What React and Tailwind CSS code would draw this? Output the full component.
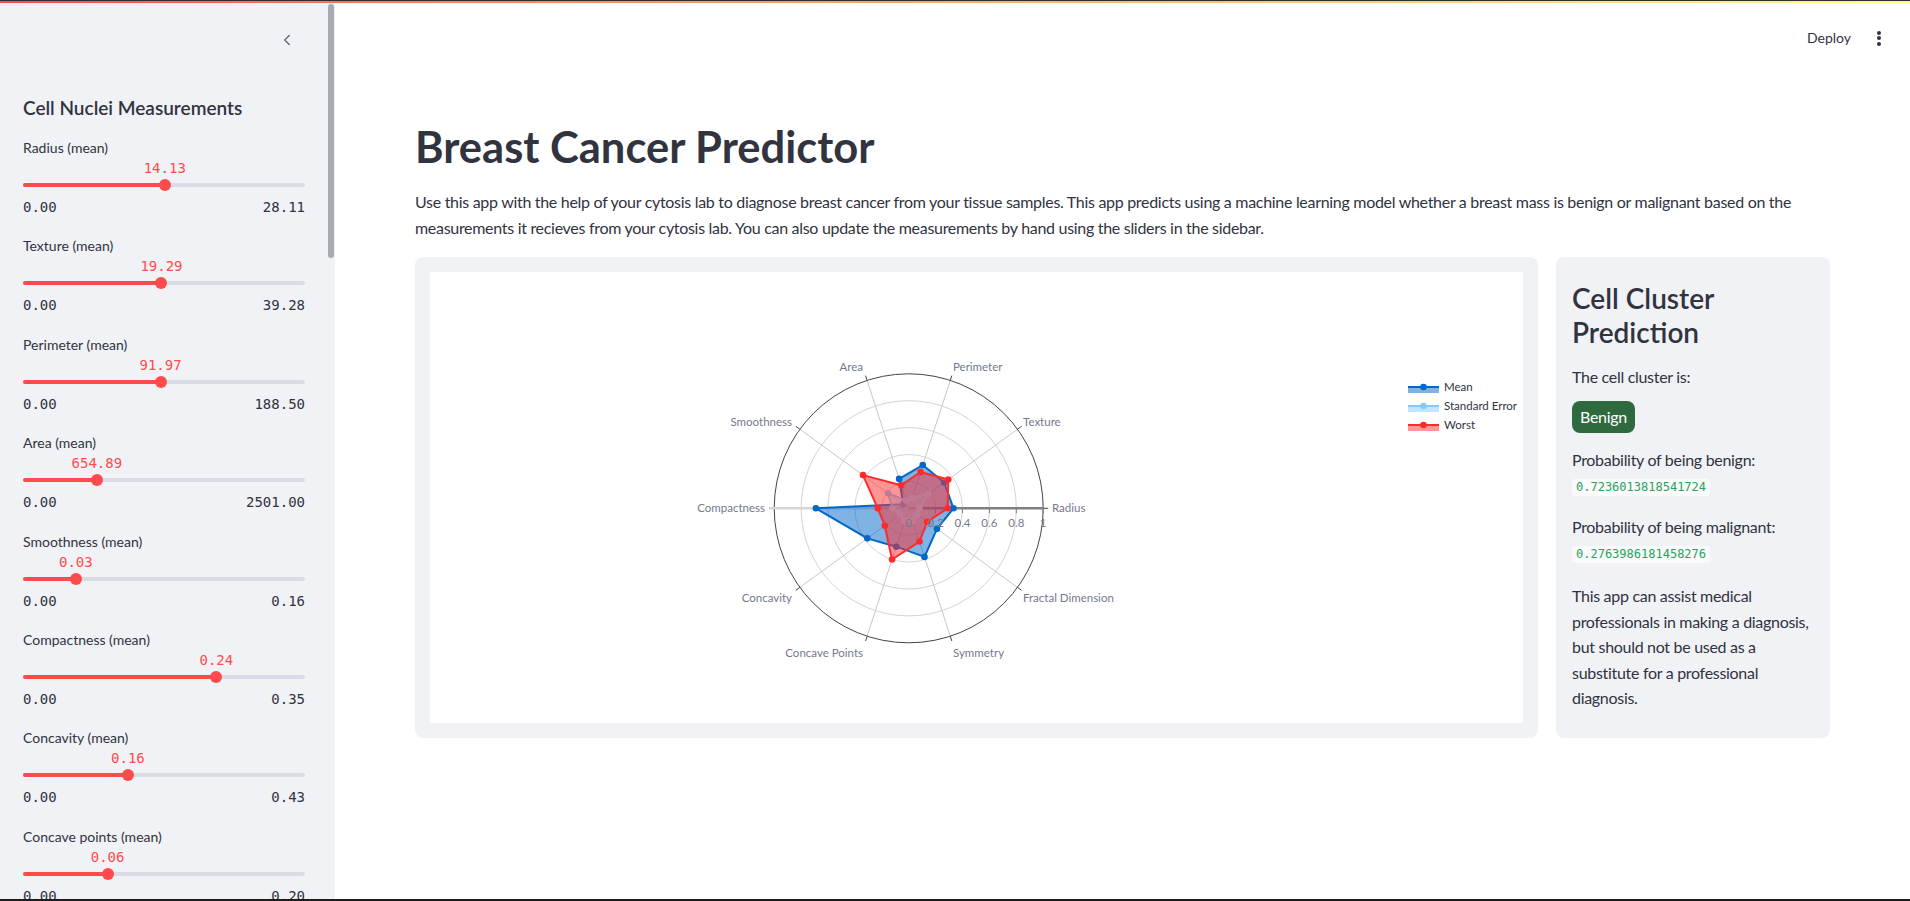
import { ChevronLeft } from 'lucide-react'

const SLIDERS = [
  { label: 'Radius (mean)', value: 14.13, max: 28.11 },
  { label: 'Texture (mean)', value: 19.29, max: 39.28 },
  { label: 'Perimeter (mean)', value: 91.97, max: 188.5 },
  { label: 'Area (mean)', value: 654.89, max: 2501 },
  { label: 'Smoothness (mean)', value: 0.03, max: 0.16 },
  { label: 'Compactness (mean)', value: 0.24, max: 0.35 },
  { label: 'Concavity (mean)', value: 0.16, max: 0.43 },
  { label: 'Concave points (mean)', value: 0.06, max: 0.2 },
]

const CATEGORIES = ['Radius', 'Texture', 'Perimeter', 'Area', 'Smoothness', 'Compactness', 'Concavity', 'Concave Points', 'Symmetry', 'Fractal Dimension']

// label anchor points measured off the chart, relative to the plot area
const LABELS = [
  [622, 236, 'start'], [593, 150, 'start'], [523, 95, 'start'], [433, 95, 'end'], [362, 150, 'end'],
  [335, 236, 'end'], [362, 326, 'end'], [433, 381, 'end'], [523, 381, 'start'], [593, 326, 'start'],
]

const TRACES = [
  { name: 'Mean', color: '#0068c9', fill: 'rgba(0,104,201,0.5)', r: [0.333, 0.326, 0.338, 0.23, 0.05, 0.69, 0.38, 0.3, 0.38, 0.26] },
  { name: 'Standard Error', color: '#83c9ff', fill: 'rgba(131,201,255,0.5)', r: [0.08, 0.18, 0.08, 0.06, 0.19, 0.12, 0.08, 0.1, 0.1, 0.08] },
  { name: 'Worst', color: '#ff2b2b', fill: 'rgba(255,43,43,0.5)', r: [0.29, 0.364, 0.284, 0.18, 0.42, 0.23, 0.22, 0.4, 0.26, 0.17] },
]

function Slider({ label, value, max }) {
  const pct = `${(value / max) * 100}%`
  return (
    <div className="h-[98.4px]">
      <div className="h-5 text-sm leading-5 text-[#31333f]">{label}</div>
      <div className="relative h-5">
        <span className="absolute top-0 -translate-x-1/2 font-['DejaVu_Sans_Mono',monospace] text-sm leading-5 text-[#ff4b4b]" style={{ left: pct }}>
          {value.toFixed(2)}
        </span>
      </div>
      <div className="flex h-[14px] items-center">
        <div className="relative h-1 w-full rounded-full bg-[#d9dce4]">
          <div className="absolute inset-y-0 left-0 rounded-full bg-[#ff4b4b]" style={{ width: pct }} />
          <div className="absolute top-1/2 h-3 w-3 -translate-x-1/2 -translate-y-1/2 rounded-full bg-[#ff4b4b]" style={{ left: pct }} />
        </div>
      </div>
      <div className="mt-[5px] flex justify-between font-['DejaVu_Sans_Mono',monospace] text-sm leading-5 text-[#31333f]">
        <span>0.00</span>
        <span>{max.toFixed(2)}</span>
      </div>
    </div>
  )
}

function Radar() {
  const cx = 478.7
  const cy = 236.3
  const R = 134.5
  const pt = (i, r) => {
    const a = (i * Math.PI) / 5
    return [cx + r * R * Math.cos(a), cy - r * R * Math.sin(a)]
  }
  const axisText = '#75798e'

  return (
    <svg width="1094" height="451" className="block">
      {[0.2, 0.4, 0.6, 0.8].map(r => (
        <circle key={r} cx={cx} cy={cy} r={r * R} fill="none" stroke="#d4d4d4" strokeWidth="1" />
      ))}
      {CATEGORIES.map((c, i) => {
        const [x1, y1] = pt(i, 1)
        const [x2, y2] = pt(i, 1.037)
        return (
          <g key={c}>
            <line x1={cx} y1={cy} x2={x1} y2={y1} stroke="#c8c8c8" strokeWidth="1" />
            <line x1={x1} y1={y1} x2={x2} y2={y2} stroke="#444" strokeWidth="1" />
          </g>
        )
      })}
      <circle cx={cx} cy={cy} r={R} fill="none" stroke="#444" strokeWidth="1" />
      <line x1={cx - R - 5} y1={cy} x2={cx} y2={cy} stroke="#d6d6d6" strokeWidth="2.5" />
      <line x1={cx} y1={cy} x2={cx + R} y2={cy} stroke="#808080" strokeWidth="2.5" />
      {[0.2, 0.4, 0.6, 0.8, 1].map(r => (
        <line key={r} x1={cx + r * R} y1={cy} x2={cx + r * R} y2={cy + 5} stroke="#808080" strokeWidth="1" />
      ))}

      {TRACES.map(t => {
        const pts = t.r.map((r, i) => pt(i, r))
        const d = pts.map(p => p.join(',')).join(' ')
        return (
          <g key={t.name}>
            <polygon points={d} fill={t.fill} stroke={t.color} strokeWidth="2" strokeLinejoin="round" />
            {pts.map(([x, y], i) => (
              <circle key={i} cx={x} cy={y} r="3.3" fill={t.color} />
            ))}
          </g>
        )
      })}

      <g fontFamily="Lato, sans-serif" fontSize="11.5" fill={axisText}>
        {[0, 0.2, 0.4, 0.6, 0.8, 1].map(r => (
          <text key={r} x={cx + r * R} y={cy + 19} textAnchor="middle">{r === 0 || r === 1 ? String(r) : r.toFixed(1)}</text>
        ))}
        {CATEGORIES.map((c, i) => (
          <text key={c} x={LABELS[i][0]} y={LABELS[i][1] + 4} textAnchor={LABELS[i][2]}>{c}</text>
        ))}
      </g>

      <g fontFamily="Lato, sans-serif" fontSize="11.5" fill="#31333f">
        {TRACES.map((t, k) => {
          const y = [115, 134, 153][k]
          return (
            <g key={t.name}>
              <rect x="978" y={y} width="31" height="6" fill={t.fill} />
              <line x1="978" y1={y} x2="1009" y2={y} stroke={t.color} strokeWidth="2" />
              <circle cx="993.5" cy={y} r="3.3" fill={t.color} />
              <text x="1014" y={y + 4}>{t.name}</text>
            </g>
          )
        })}
      </g>
    </svg>
  )
}

export default function App() {
  return (
    <div className="flex h-[901px] w-[1910px] flex-col overflow-hidden bg-white font-['Lato',sans-serif] text-[#31333f]">
      <div className="h-px bg-[#2f2f2f]" />
      <div className="h-[2px] bg-gradient-to-r from-[#ff4b4b] to-[#fffd80]" />

      <div className="flex min-h-0 flex-1">
        <aside className="relative w-[335px] shrink-0 overflow-hidden bg-[#f0f2f6]">
          <div className="absolute right-[1px] top-[1px] h-[254px] w-[6px] rounded-full bg-[#a9abb0]" />
          <div className="flex justify-end pr-[39px] pt-[28px]">
            <ChevronLeft size={18} strokeWidth={2} className="text-[#6b6e7a]" />
          </div>
          <div className="pl-[23px] pr-[30px]">
            <h3 className="mt-[45px] text-[19px] font-semibold leading-7 text-[#31333f]">Cell Nuclei Measurements</h3>
            <div className="mt-4">
              {SLIDERS.map((s, i) => (
                <Slider key={i} {...s} />
              ))}
            </div>
          </div>
        </aside>

        <main className="min-w-0 flex-1">
          <div className="flex h-[70px] items-center justify-end gap-[26px] pr-[29px]">
            <span className="text-sm text-[#31333f]">Deploy</span>
            <div className="flex flex-col gap-[1.5px]">
              <span className="h-1 w-1 rounded-full bg-[#31333f]" />
              <span className="h-1 w-1 rounded-full bg-[#31333f]" />
              <span className="h-1 w-1 rounded-full bg-[#31333f]" />
            </div>
          </div>

          <div className="px-20">
            <h1 className="mt-[47px] text-[43.5px] font-bold leading-[52px] text-[#31333f]">Breast Cancer Predictor</h1>
            <p className="mt-[17px] text-base leading-[26px] tracking-[-0.3px] text-[#31333f]">
              Use this app with the help of your cytosis lab to diagnose breast cancer from your tissue samples. This app predicts using a machine learning model whether a breast mass is benign or malignant based on the
              <br />
              measurements it recieves from your cytosis lab. You can also update the measurements by hand using the sliders in the sidebar.
            </p>

            <div className="mt-4 flex gap-[18px]">
              <div className="w-[1123px] shrink-0 rounded-lg bg-[#f0f2f6] p-[15px]">
                <div className="h-[451px] bg-white">
                  <Radar />
                </div>
              </div>

              <div className="flex-1 rounded-lg bg-[#f0f2f6] px-4 pt-6 tracking-[-0.3px]">
                <h3 className="text-[28px] font-semibold leading-[34px] tracking-normal">Cell Cluster<br />Prediction</h3>
                <p className="mt-[15px] text-base leading-[26px]">The cell cluster is:</p>
                <span className="mt-[11px] inline-flex h-8 items-center rounded-lg bg-[#2f6a3f] px-2 text-base text-white">Benign</span>
                <p className="mt-[14px] text-base leading-[26px]">Probability of being benign:</p>
                <code className="mt-[5px] inline-block rounded bg-[#fafafa] px-1 font-['DejaVu_Sans_Mono',monospace] text-xs leading-[17px] tracking-normal text-[#27a35c]">0.7236013818541724</code>
                <p className="mt-[17px] text-base leading-[26px]">Probability of being malignant:</p>
                <code className="mt-1 inline-block rounded bg-[#fafafa] px-1 font-['DejaVu_Sans_Mono',monospace] text-xs leading-[17px] tracking-normal text-[#27a35c]">0.2763986181458276</code>
                <p className="mt-[19px] text-base leading-[25.6px]">
                  This app can assist medical professionals in making a diagnosis, but should not be used as a substitute for a professional diagnosis.
                </p>
              </div>
            </div>
          </div>
        </main>
      </div>

      <div className="h-[2px] bg-[#1c1c1c]" />
    </div>
  )
}
